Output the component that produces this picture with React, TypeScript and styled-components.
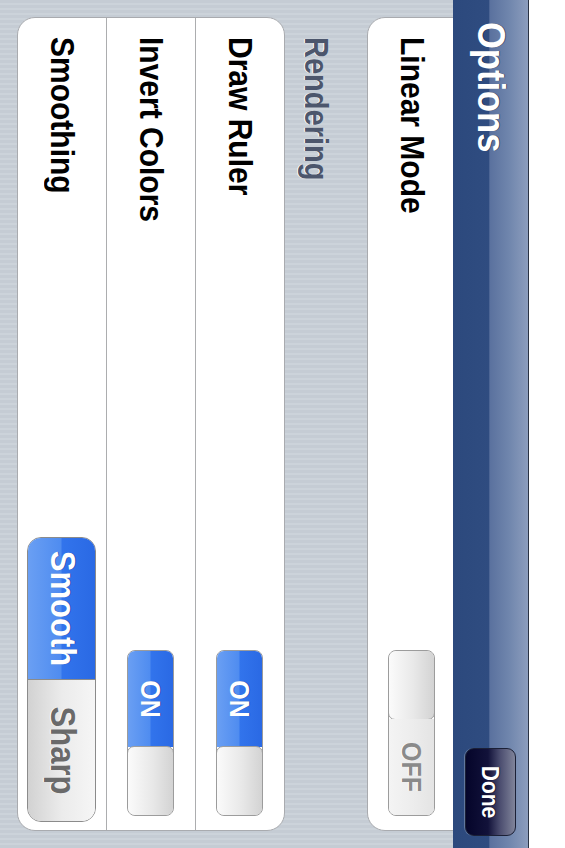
import React from "react";
import styled, { createGlobalStyle, css } from "styled-components";

const GlobalStyle = createGlobalStyle`
  html, body {
    margin: 0;
    padding: 0;
    background: #ffffff;
  }
  body {
    font-family: "Liberation Sans", Arial, Helvetica, sans-serif;
    -webkit-font-smoothing: antialiased;
  }
`;

/* The device font is a little taller than Arial at the same width. */
const tallText = css`
  display: inline-block;
  transform: scaleY(1.12);
`;

const Viewport = styled.div`
  width: 565px;
  height: 848px;
  overflow: hidden;
  background: #ffffff;
`;

/* The whole phone screen is shown turned a quarter turn clockwise. */
const Stage = styled.div`
  width: 848px;
  height: 529px;
  transform-origin: 0 0;
  transform: translateX(529px) rotate(90deg);
  display: flex;
  flex-direction: column;
  overflow: hidden;
`;

const NavBar = styled.header`
  flex: 0 0 76px;
  box-sizing: border-box;
  border-top: 1px solid #2a3344;
  background: linear-gradient(
    to bottom,
    #8c9dbd 0%,
    #7086ad 25%,
    #5a719e 51%,
    #2f4c80 52%,
    #2c497d 100%
  );
  display: flex;
  align-items: center;
  justify-content: space-between;
  padding: 0 12px 0 22px;
`;

const Title = styled.h1`
  ${tallText};
  margin: 0;
  font-size: 34.5px;
  font-weight: bold;
  color: #ffffff;
  text-shadow: 0 -1px 0 rgba(0, 0, 0, 0.45);
`;

const DoneButton = styled.button`
  width: 88px;
  height: 51px;
  box-sizing: border-box;
  border: 1px solid #1b2036;
  border-radius: 9px;
  background: linear-gradient(
    to bottom,
    #80849a 0%,
    #4c4e70 30%,
    #12123a 55%,
    #05052a 100%
  );
  box-shadow: 0 1px 0 rgba(255, 255, 255, 0.25);
  color: #ffffff;
  font-family: inherit;
  font-size: 21px;
  font-weight: bold;
  text-shadow: 0 -1px 0 rgba(0, 0, 0, 0.6);
  padding: 0;
  span {
    ${tallText};
  }
`;

const Content = styled.main`
  flex: 1 1 auto;
  overflow: hidden;
  background: repeating-linear-gradient(
    to right,
    #c5ccd4 0px,
    #c5ccd4 3px,
    #ccd3da 3px,
    #ccd3da 5px
  );
  padding: 0 17px;
`;

const ScrollBody = styled.div`
  display: flex;
  flex-direction: column;
  margin-top: -4px;
`;

const Card = styled.section<{ $underBar?: boolean }>`
  background: #ffffff;
  border: 1px solid #a9abaf;
  border-radius: ${(p) => (p.$underBar ? "0 0 18px 18px" : "18px")};
  overflow: hidden;
  display: flex;
  flex-direction: column;
`;

const Row = styled.div<{ $tight?: boolean }>`
  height: 88px;
  display: flex;
  align-items: center;
  justify-content: space-between;
  padding: 0 ${(p) => (p.$tight ? 8 : 14)}px 0 19px;
  & + & {
    border-top: 1px solid #acadaf;
  }
`;

const Label = styled.span`
  ${tallText};
  font-size: 30px;
  font-weight: bold;
  color: #000000;
`;

const SectionHeader = styled.h2`
  margin: 0;
  height: 82px;
  box-sizing: border-box;
  display: flex;
  align-items: flex-end;
  padding: 0 0 14px 20px;
  font-size: 29px;
  font-weight: bold;
  color: #4c566c;
  text-shadow: 0 1px 0 #ffffff;
  span {
    ${tallText};
  }
`;

const SwitchFrame = styled.div<{ $on: boolean }>`
  width: 166px;
  height: 47px;
  box-sizing: border-box;
  border: 1px solid #9c9c9c;
  border-radius: 8px;
  overflow: hidden;
  display: flex;
  flex-direction: ${(p) => (p.$on ? "row" : "row-reverse")};
`;

const SwitchTrack = styled.div<{ $on: boolean }>`
  flex: 1 1 auto;
  display: flex;
  align-items: center;
  justify-content: center;
  font-size: 25px;
  font-weight: bold;
  color: ${(p) => (p.$on ? "#ffffff" : "#8a8a8a")};
  text-shadow: ${(p) =>
    p.$on ? "0 -1px 0 rgba(0,0,40,0.35)" : "0 1px 0 #ffffff"};
  background: ${(p) =>
    p.$on
      ? "linear-gradient(to bottom, #2a69e4 0%, #3274ec 49%, #4f8cf0 51%, #6a9ff3 100%)"
      : "linear-gradient(to bottom, #e4e4e4 0%, #ededed 50%, #f4f4f4 100%)"};
  span {
    ${tallText};
  }
`;

const SwitchKnob = styled.div`
  flex: 0 0 70px;
  box-sizing: border-box;
  border: 1px solid #9e9e9e;
  border-radius: 7px;
  margin: -1px;
  background: linear-gradient(to bottom, #d3d3d3 0%, #e8e8e8 45%, #fbfbfb 100%);
`;

const Segmented = styled.div`
  width: 285px;
  height: 69px;
  box-sizing: border-box;
  border: 1px solid #8b8b8b;
  border-radius: 14px;
  overflow: hidden;
  display: flex;
`;

const Segment = styled.div<{ $selected: boolean }>`
  flex: 1 1 0;
  display: flex;
  align-items: center;
  justify-content: center;
  font-size: 31px;
  font-weight: bold;
  color: ${(p) => (p.$selected ? "#ffffff" : "#6a6a6a")};
  text-shadow: ${(p) =>
    p.$selected ? "0 -1px 0 rgba(0,0,40,0.35)" : "0 1px 0 #ffffff"};
  background: ${(p) =>
    p.$selected
      ? "linear-gradient(to bottom, #2a69e4 0%, #3274ec 49%, #4f8cf0 51%, #6a9ff3 100%)"
      : "linear-gradient(to bottom, #f6f6f6 0%, #ebebeb 50%, #d2d2d2 100%)"};
  & + & {
    border-left: 1px solid #8b8b8b;
  }
  span {
    ${tallText};
  }
`;

function Switch({ on }: { on: boolean }) {
  return (
    <SwitchFrame $on={on}>
      <SwitchTrack $on={on}>
        <span>{on ? "ON" : "OFF"}</span>
      </SwitchTrack>
      <SwitchKnob />
    </SwitchFrame>
  );
}

export default function App() {
  return (
    <Viewport>
      <GlobalStyle />
      <Stage>
        <NavBar>
          <Title>Options</Title>
          <DoneButton>
            <span>Done</span>
          </DoneButton>
        </NavBar>
        <Content>
          <ScrollBody>
            <Card $underBar>
              <Row>
                <Label>Linear Mode</Label>
                <Switch on={false} />
              </Row>
            </Card>
            <SectionHeader>
              <span>Rendering</span>
            </SectionHeader>
            <Card>
              <Row>
                <Label>Draw Ruler</Label>
                <Switch on={true} />
              </Row>
              <Row>
                <Label>Invert Colors</Label>
                <Switch on={true} />
              </Row>
              <Row $tight>
                <Label>Smoothing</Label>
                <Segmented>
                  <Segment $selected={true}>
                    <span>Smooth</span>
                  </Segment>
                  <Segment $selected={false}>
                    <span>Sharp</span>
                  </Segment>
                </Segmented>
              </Row>
            </Card>
          </ScrollBody>
        </Content>
      </Stage>
    </Viewport>
  );
}
